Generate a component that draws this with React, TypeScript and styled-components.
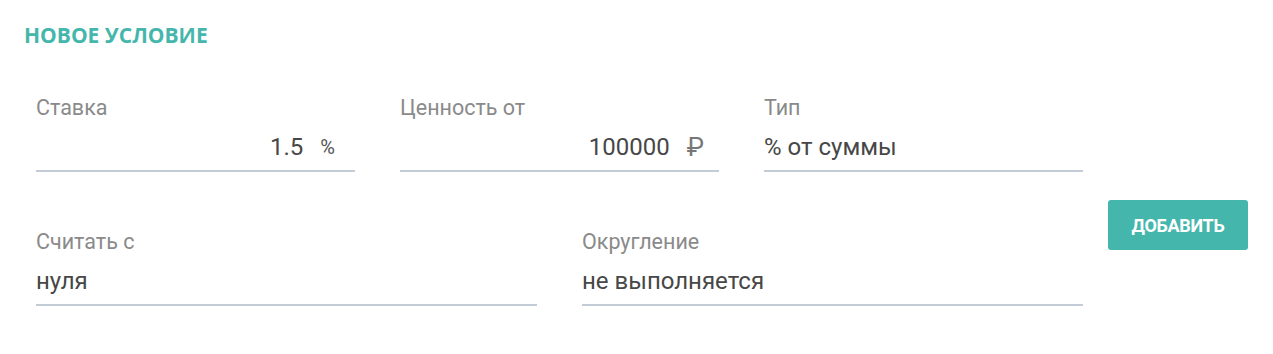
import styled, { createGlobalStyle } from "styled-components";

const GlobalStyle = createGlobalStyle`
  body {
    margin: 0;
    background: #fff;
    font-family: Roboto, "Liberation Sans", sans-serif;
  }
`;

const Page = styled.div`
  padding: 23px 24px 0 24px;
`;

const Title = styled.h2`
  margin: 0;
  font-family: "Open Sans", sans-serif;
  font-weight: 700;
  font-size: 21px;
  line-height: 24px;
  color: #45b6ac;
  text-transform: uppercase;
`;

const Body = styled.div`
  display: flex;
  align-items: flex-start;
  gap: 25px;
  margin: 50px 0 0 12px;
`;

const Form = styled.div`
  width: 1047px;
  display: flex;
  flex-direction: column;
  gap: 59px;
`;

const Row = styled.div<{ cols: number }>`
  display: grid;
  grid-template-columns: repeat(${(p) => p.cols}, 1fr);
  column-gap: 45px;
`;

const Field = styled.div`
  display: flex;
  flex-direction: column;
  gap: 5px;
`;

const Label = styled.label`
  font-size: 21.5px;
  line-height: 22px;
  color: #8a8a8a;
`;

const InputRow = styled.div<{ $align?: "left" | "right"; $pr?: number }>`
  height: 46px;
  display: flex;
  align-items: center;
  justify-content: ${(p) => (p.$align === "right" ? "flex-end" : "flex-start")};
  padding-right: ${(p) => p.$pr ?? 0}px;
  border-bottom: 2px solid #c3cbd6;
`;

const Value = styled.span`
  font-size: 24px;
  color: #474747;
`;

const Unit = styled.span<{ $size?: number; $color?: string }>`
  margin-left: 17px;
  font-size: ${(p) => p.$size ?? 20}px;
  color: ${(p) => p.$color ?? "#555"};
`;

const AddButton = styled.button`
  margin-top: 103px;
  width: 140px;
  height: 50px;
  border: none;
  border-radius: 3px;
  background: #45b6ac;
  color: #fff;
  font-family: Roboto, sans-serif;
  font-weight: 700;
  font-size: 18px;
  letter-spacing: -0.3px;
  text-transform: uppercase;
  cursor: pointer;
`;

export default function App() {
  return (
    <>
      <GlobalStyle />
      <Page>
        <Title>Новое условие</Title>
        <Body>
          <Form>
            <Row cols={3}>
              <Field>
                <Label>Ставка</Label>
                <InputRow $align="right" $pr={20}>
                  <Value>1.5</Value>
                  <Unit>%</Unit>
                </InputRow>
              </Field>
              <Field>
                <Label>Ценность от</Label>
                <InputRow $align="right" $pr={15}>
                  <Value>100000</Value>
                  <Unit $size={26} $color="#777">₽</Unit>
                </InputRow>
              </Field>
              <Field>
                <Label>Тип</Label>
                <InputRow>
                  <Value>% от суммы</Value>
                </InputRow>
              </Field>
            </Row>
            <Row cols={2}>
              <Field>
                <Label>Считать с</Label>
                <InputRow>
                  <Value>нуля</Value>
                </InputRow>
              </Field>
              <Field>
                <Label>Округление</Label>
                <InputRow>
                  <Value>не выполняется</Value>
                </InputRow>
              </Field>
            </Row>
          </Form>
          <AddButton>Добавить</AddButton>
        </Body>
      </Page>
    </>
  );
}
